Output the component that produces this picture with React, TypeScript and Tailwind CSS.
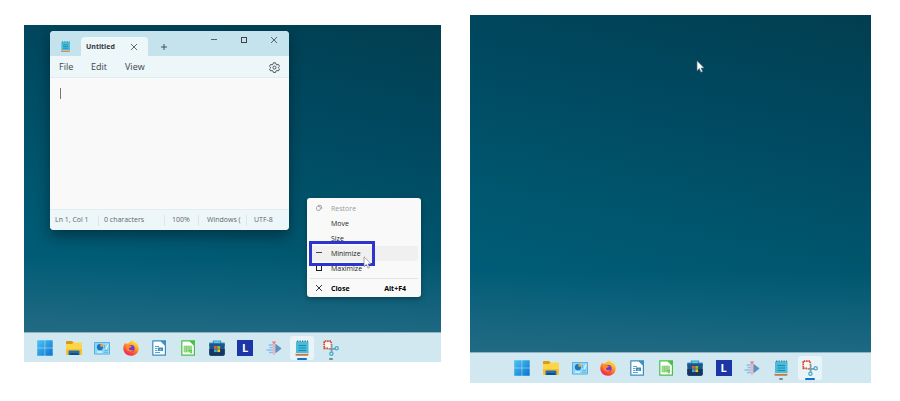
import type { ReactNode } from "react";

const svgProps = { viewBox: "0 0 16 16", className: "size-4", "aria-hidden": true } as const;

const WindowsIcon = () => (
  <svg {...svgProps}>
    <defs>
      <linearGradient id="win" x1="0" y1="0" x2="1" y2="1">
        <stop offset="0" stopColor="#4cc4f5" />
        <stop offset="1" stopColor="#0873cf" />
      </linearGradient>
    </defs>
    <path fill="url(#win)" d="M.2.3h7.5v7.5H.2zM8.200.3h7.500v7.500H8.200zM.2 8.300h7.500v7.500H.2zM8.200 8.300h7.500v7.500H8.200z" />
  </svg>
);

const FolderIcon = () => (
  <svg {...svgProps}>
    <path fill="#d99a14" d="M0 2q0-1 1-1h5l1.500 1.500V5H0z" />
    <path fill="#fdd549" d="M0 4h6l1.400-1.500H15q1 0 1 1V14q0 1-1 1H1q-1 0-1-1z" />
    <path fill="#f9c02e" d="M0 9h16v5q0 1-1 1H1q-1 0-1-1z" />
    <path fill="#1f6fae" d="M2.500 15v-3.500q0-1 1-1h9q1 0 1 1V15z" />
    <path fill="#134d7e" d="M4.500 13h7l1.500 2H3z" />
  </svg>
);

const ControlPanelIcon = () => (
  <svg {...svgProps}>
    <rect x="0" y="2" width="16" height="12.500" rx="1" fill="#4aa9db" />
    <rect x=".8" y="2.800" width="14.400" height="11" rx=".5" fill="#8fd6f6" />
    <circle cx="6" cy="7.200" r="3.100" fill="#1478c8" />
    <path fill="#f59e35" d="M6.400 3.400a3.300 3.300 0 0 1 3.200 3.300H6.400z" />
    <path stroke="#f8ffff" d="M12.200 9l1.800-4.500M3 12h5" />
    <path stroke="#5aaeda" strokeWidth=".8" d="M10.500 5v3M10.500 10.500h3.500M10 12.300h4" />
  </svg>
);

const FirefoxIcon = () => (
  <svg {...svgProps}>
    <defs>
      <linearGradient id="fox" x1=".8" y1="0" x2=".25" y2="1">
        <stop offset="0" stopColor="#fff04a" />
        <stop offset=".35" stopColor="#ffad24" />
        <stop offset=".7" stopColor="#ff5136" />
        <stop offset="1" stopColor="#e91f6c" />
      </linearGradient>
    </defs>
    <path
      fill="url(#fox)"
      d="M9.600.2c1 1.200 1.700 2 2.700 2.800l.5-.7c1.900 1.700 2.900 4 2.900 6.200 0 4.200-3.400 7.300-7.700 7.300S.3 12.700.3 8.600C.3 6.300 1.100 4 2.500 2.600l.3 1.600C4 3.300 4.700 3.200 5.700 3.400 6.300 1.900 8 .9 9.600.2z"
    />
    <circle cx="8.200" cy="8.400" r="3.400" fill="#7a35cf" />
    <path fill="#ff8a2b" d="M2.400 6c1.500-1.200 3.400-1.500 5.100-.4L9 6.800c-1 .7-2 .6-2.800 1.200-.5 1 .2 2 1.500 2.200 1 .1 1.600-.5 2.700-.2-.9 2-4 2.400-5.900.6C3.300 9.400 3 7.500 2.400 6z" />
  </svg>
);

const DocIcon = ({ color, children }: { color: string; children: ReactNode }) => (
  <svg {...svgProps}>
    <path fill="#fff" stroke={color} strokeWidth="1.200" strokeLinejoin="round" d="M1.800.8h8L14.400 5.300v9.900H1.800z" />
    <path fill={color} d="M9.800.2H15v5z" />
    {children}
  </svg>
);

const WriterIcon = () => (
  <DocIcon color="#3a8cc0">
    <path stroke="#5ba1cd" d="M4 6.500h4M4 8.500h2.500M4 10.500h2.500M4 12.500h5" />
    <path fill="#3a8cc0" d="M7 7.500h5v3.500H7z" />
    <path fill="#8fc4e3" d="M8 10.500l1.500-2 1.500 2z" />
  </DocIcon>
);

const CalcIcon = () => (
  <DocIcon color="#49be43">
    <path fill="#b4e3a8" d="M4 6h7.500v6H4z" />
    <path fill="none" stroke="#6cc962" strokeWidth=".6" d="M4 6h7.500v6H4zM4 8h7.500M4 10h7.500M6.500 6v6M9 6v6" />
    <path fill="#49be43" d="M9 10.300h3v1H9zM10 12.300h2v1h-2z" />
  </DocIcon>
);

const StoreIcon = () => (
  <svg {...svgProps}>
    <path fill="none" stroke="#2ba3d8" strokeWidth="1.300" d="M4.500 4V1.100h7V4" />
    <path fill="#2480b6" d="M.3 2.600h15.400V6H.3z" />
    <path fill="#1c558b" d="M.3 3.800h15.400V14q0 1.700-1.700 1.700H2Q.3 15.700.3 14z" />
    <path fill="#163761" d="M.3 9h15.400v5q0 1.700-1.700 1.700H2Q.3 15.700.3 14z" />
    <path fill="#f25a2c" d="M5 6h2.800v2.800H5z" />
    <path fill="#85c627" d="M8.300 6h2.800v2.800H8.300z" />
    <path fill="#25b0ef" d="M5 9.300h2.800v2.800H5z" />
    <path fill="#fcc21b" d="M8.300 9.300h2.800v2.800H8.300z" />
  </svg>
);

const LIcon = () => (
  <span className="flex size-4 items-center justify-center bg-[#1c36a8] text-[11px] leading-4 font-bold text-white">L</span>
);

const SpeedIcon = () => (
  <svg {...svgProps}>
    <path stroke="#8fbdf0" strokeWidth="1.600" d="M2.500 5H7M3.500 7.500H7M.5 10h6.500M3 12.500h4" />
    <path fill="#5f8fc6" stroke="#4b7cb5" strokeWidth=".5" strokeLinejoin="round" d="M9.700 4.300l5.500 4.200-5.500 4.200z" />
    <path stroke="#f3aeac" strokeWidth="1.700" d="M8 2.500v12.500" />
    <path fill="#ea7a72" d="M5.800 1.500h4.400L8 4.500z" />
  </svg>
);

const NotepadIcon = ({ small }: { small?: boolean }) => (
  <svg viewBox="0 0 16 16" className={small ? "size-[11px]" : "size-4"} aria-hidden="true">
    <path fill="#47bcdc" d="M2 1.500h12.500v12H2z" />
    <path fill="#c07a45" d="M1.600 13.600h13l-.5 2.200H1.600z" />
    <path fill="#eddfd0" d="M2 13h12.500v.9H2z" />
    <path stroke="#2387a8" strokeWidth="1.100" d="M4.500 5.500h7.500M4.500 8h7.500M4.500 10.500h7.500" />
    <path stroke="#2f7f98" strokeWidth="1.500" strokeDasharray="1.300 1.200" d="M3 1.200h11" />
  </svg>
);

const SnipIcon = () => (
  <svg {...svgProps}>
    <path fill="#fff4ef" d="M1 1h7.500v7.500H1z" />
    <path fill="none" stroke="#cc4a2f" strokeWidth="1.700" strokeDasharray="1.600 .7" d="M5 8.300H1.200V1.200h7V4.500" />
    <path stroke="#8a969e" strokeWidth="1.700" d="M8.600 4v8M5.500 8.800h6.500" />
    <circle cx="13.700" cy="8.300" r="1.600" fill="none" stroke="#3fadd2" strokeWidth="1.300" />
    <circle cx="8.400" cy="13.700" r="1.600" fill="none" stroke="#3fadd2" strokeWidth="1.300" />
  </svg>
);

const apps = [
  { name: "Start", Icon: WindowsIcon },
  { name: "File Explorer", Icon: FolderIcon },
  { name: "Control Panel", Icon: ControlPanelIcon },
  { name: "Firefox", Icon: FirefoxIcon },
  { name: "Writer", Icon: WriterIcon },
  { name: "Calc", Icon: CalcIcon },
  { name: "Microsoft Store", Icon: StoreIcon },
  { name: "L", Icon: LIcon },
  { name: "Speed", Icon: SpeedIcon },
  { name: "Notepad", Icon: NotepadIcon },
  { name: "Snipping Tool", Icon: SnipIcon },
];

function Taskbar({ active, className }: { active: string; className: string }) {
  return (
    <nav aria-label="Taskbar" className={`flex items-center justify-between border-t border-[#8fb5c2] bg-[#d1e8f0] ${className}`}>
      {apps.map(({ name, Icon }) => {
        const running = name === "Notepad" || name === "Snipping Tool";
        return (
          <button
            key={name}
            aria-label={name}
            className={`relative flex size-6 items-center justify-center rounded-[3px] ${name === active ? "bg-[#e9f4f8]" : ""}`}
          >
            <Icon />
            {running && (
              <span
                className={`absolute bottom-0 h-0.5 rounded-full ${name === active ? "w-2.5 bg-[#1273c8]" : "w-1 bg-[#7d8b92]"}`}
              />
            )}
          </button>
        );
      })}
    </nav>
  );
}

const Cross = () => (
  <svg viewBox="0 0 8 8" className="size-2" fill="none" stroke="currentColor" strokeWidth=".8" aria-hidden="true">
    <path d="M1 1l6 6M7 1L1 7" />
  </svg>
);
const Square = () => (
  <svg viewBox="0 0 8 8" className="size-2" fill="none" stroke="currentColor" aria-hidden="true">
    <rect x="1.500" y="1.500" width="5" height="5" />
  </svg>
);
const Dash = () => (
  <svg viewBox="0 0 8 8" className="size-2" stroke="currentColor" strokeWidth=".8" aria-hidden="true">
    <path d="M1 3.500h6" />
  </svg>
);
const Gear = () => (
  <svg viewBox="0 0 20 20" className="size-[11px]" fill="none" stroke="currentColor" strokeWidth="1.600" strokeLinejoin="round" aria-hidden="true">
    <path d="M8 1.500h4l.7 2.700 1.700 1 2.700-.8 2 3.400-2 1.900v1.200l2 1.900-2 3.400-2.700-.8-1.700 1-.7 2.600H8l-.7-2.600-1.700-1-2.700.8-2-3.400 2-1.900V9.700l-2-1.900 2-3.400 2.700.8 1.700-1z" />
    <circle cx="10" cy="10.200" r="2.800" />
  </svg>
);
const Restore = () => (
  <svg viewBox="0 0 8 8" className="size-2" fill="none" stroke="currentColor" strokeWidth=".9" aria-hidden="true">
    <rect x="1.500" y="2.500" width="3.800" height="3.800" rx="1" />
    <path d="M2.800 1.300h2.200q1.600 0 1.600 1.600V5" />
  </svg>
);

const Pointer = ({ className }: { className: string }) => (
  <svg viewBox="0 0 10 15" className={`absolute h-[13px] w-[9px] ${className}`} aria-hidden="true">
    <path fill="#fff" stroke="#68737a" strokeWidth=".7" d="M1 1v11.300l2.700-2.500 1.800 4.200 1.900-.8-1.800-4.100h3.600z" />
  </svg>
);

function NotepadWindow() {
  return (
    <section
      aria-label="Notepad"
      className="absolute top-1.5 left-[26px] flex h-[199px] w-[239px] flex-col overflow-hidden rounded-[4px] bg-[#f9f9f9] text-[#3c4448] shadow-[0_6px_14px_rgba(0,20,30,0.5)]"
    >
      <header className="flex h-[25px] shrink-0 items-start bg-[#c4e3ed]">
        <span className="flex w-[31px] justify-center pt-2.5">
          <NotepadIcon small />
        </span>
        <div className="mt-1.5 flex h-[19px] w-[67px] items-center justify-between rounded-t-[4px] bg-[#edf6f9] pr-2.5 pl-[5px]">
          <span className="pt-px text-[7px] font-bold text-[#30383c]">Untitled</span>
          <button aria-label="Close tab"><Cross /></button>
        </div>
        <button aria-label="New tab" className="mt-3 ml-3">
          <svg viewBox="0 0 8 8" className="size-2" stroke="currentColor" strokeWidth=".9" aria-hidden="true">
            <path d="M4 1v6M1 4h6" />
          </svg>
        </button>
        <div className="mt-[5px] ml-auto flex gap-[22px] pr-[11px]">
          <button aria-label="Minimize window"><Dash /></button>
          <button aria-label="Maximize window"><Square /></button>
          <button aria-label="Close window"><Cross /></button>
        </div>
      </header>
      <div className="flex h-[22px] shrink-0 items-center border-b border-[#dfecf0] bg-[#edf6f9] pt-px pr-[9px] pl-[9px] text-[9px]">
        <button className="w-8 text-left">File</button>
        <button className="w-[34px] text-left">Edit</button>
        <button>View</button>
        <button aria-label="Settings" className="ml-auto"><Gear /></button>
      </div>
      <div className="flex min-h-0 flex-1 pt-2.5 pl-2.5">
        <span className="h-[11px] w-px bg-[#777]" />
        <textarea aria-label="Document text" className="flex-1 resize-none bg-transparent text-[9px] outline-none" />
      </div>
      <footer className="flex h-[21px] shrink-0 items-center border-t border-[#e3edf0] bg-[#edf6f9] pt-px text-[7px] whitespace-nowrap text-[#5f686c]">
        <span className="w-[49px] pl-[5px]">Ln 1, Col 1</span>
        <span className="w-[66px] pl-[5px] shadow-[-1px_0_0_#dde6e9]">0 characters</span>
        <span className="w-[34px] pl-[7px] shadow-[-1px_0_0_#dde6e9]">100%</span>
        <span className="w-[48px] pl-2 shadow-[-1px_0_0_#dde6e9]">Windows (</span>
        <span className="pl-[7px] shadow-[-1px_0_0_#dde6e9]">UTF-8</span>
      </footer>
    </section>
  );
}

function MenuRow({ icon, label, className = "", shortcut }: { icon?: ReactNode; label: string; className?: string; shortcut?: string }) {
  return (
    <button role="menuitem" className={`flex h-[15px] w-full items-center rounded-[2px] text-left leading-[15px] ${className}`}>
      <span className="flex w-[21px] pb-0.5 pl-[5px]">{icon}</span>
      {label}
      {shortcut && <span className="ml-auto pr-3">{shortcut}</span>}
    </button>
  );
}

function ContextMenu() {
  return (
    <div
      role="menu"
      className="absolute top-[173px] left-[283px] h-[99px] w-[114px] rounded-[3px] bg-[#f9f9f9] px-[3px] pt-[3px] text-[7px] text-[#1c1c1c] shadow-[0_2px_5px_rgba(0,20,30,0.4)]"
    >
      <MenuRow icon={<Restore />} label="Restore" className="text-[#9c9c9c]" />
      <MenuRow label="Move" />
      <MenuRow label="Size" />
      <MenuRow icon={<Dash />} label="Minimize" className="bg-[#f0f0f0]" />
      <MenuRow icon={<Square />} label="Maximize" />
      <div className="my-[2px] h-px bg-[#e4e4e4]" />
      <MenuRow icon={<Cross />} label="Close" shortcut="Alt+F4" className="font-bold text-black" />
      <span className="absolute top-[43px] left-[2px] h-[25px] w-[66px] border-3 border-[#2c35cf]" />
      <Pointer className="top-[58px] left-[56px]" />
    </div>
  );
}

const wallpaper =
  "bg-[linear-gradient(to_top,rgba(50,112,138,0.6),rgba(50,112,138,0)_24%),linear-gradient(193deg,#023e50_0%,#00485f_28%,#00566e_60%,#005c76_80%,#0a607a_100%)]";

export default function App() {
  return (
    <main className="flex items-start gap-[29px] bg-white pr-[29px] pl-6 font-['Open_Sans','Noto_Sans',sans-serif]">
      <section aria-label="Desktop with Notepad open" className="mt-[25px] flex min-w-0 flex-[417] flex-col">
        <div className={`relative h-[307px] ${wallpaper}`}>
          <NotepadWindow />
          <ContextMenu />
        </div>
        <Taskbar active="Notepad" className="h-[30px] pr-[98px] pl-[9px]" />
      </section>
      <section aria-label="Desktop with Notepad minimized" className="mt-[15px] flex min-w-0 flex-[401] flex-col">
        <div className={`relative h-[337px] ${wallpaper}`}>
          <Pointer className="top-[45px] left-[226px]" />
        </div>
        <Taskbar active="Snipping Tool" className="h-[31px] pr-[49px] pl-10" />
      </section>
    </main>
  );
}
